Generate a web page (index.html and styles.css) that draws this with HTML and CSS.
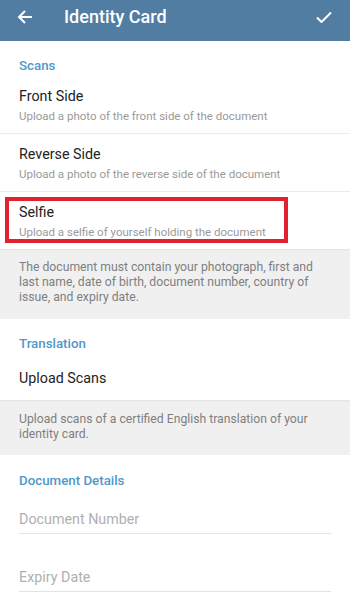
FILE: index.html
```html
<!DOCTYPE html>
<html>
<head>
<meta charset="utf-8">
<link rel="stylesheet" href="styles.css">
</head>
<body>
<div class="app">
  <header class="topbar">
    <svg class="icon back" width="16" height="16" viewBox="0 0 16 16"><path d="M15 8H2M8 2L2 8l6 6" fill="none" stroke="#fff" stroke-width="2"/></svg>
    <div class="title">Identity Card</div>
    <svg class="icon check" width="16" height="12" viewBox="0 0 16 12"><path d="M1 6.5l4.5 4.5L15 1.5" fill="none" stroke="#fff" stroke-width="2"/></svg>
  </header>
  <section class="block">
    <div class="heading">Scans</div>
    <div class="row divided">
      <div class="row-title">Front Side</div>
      <div class="row-sub">Upload a photo of the front side of the document</div>
    </div>
    <div class="row divided">
      <div class="row-title">Reverse Side</div>
      <div class="row-sub">Upload a photo of the reverse side of the document</div>
    </div>
    <div class="row selfie">
      <div class="row-title">Selfie</div>
      <div class="row-sub">Upload a selfie of yourself holding the document</div>
      <div class="highlight"></div>
    </div>
  </section>
  <div class="info info-first">The document must contain your photograph, first and last name, date of birth, document number, country of issue, and expiry date.</div>
  <section class="block">
    <div class="heading">Translation</div>
    <div class="row single">
      <div class="row-title">Upload Scans</div>
    </div>
  </section>
  <div class="info info-second">Upload scans of a certified English translation of your identity card.</div>
  <section class="block details">
    <div class="heading heading-details">Document Details</div>
    <div class="field first">Document Number</div>
    <div class="field">Expiry Date</div>
  </section>
</div>
</body>
</html>
```

FILE: styles.css
```css
* { box-sizing: border-box; }
html, body { margin: 0; padding: 0; }
body {
  width: 350px;
  height: 599px;
  overflow: hidden;
  background: #ffffff;
  font-family: Roboto, "Noto Sans", "Liberation Sans", sans-serif;
}
.app { display: flex; flex-direction: column; }
.topbar {
  height: 41px;
  background: #527da3;
  display: flex;
  align-items: center;
  padding: 0 18px 8px 17px;
  box-shadow: 0 1px 0 #c9dbe9;
}
.icon { flex: none; }
.title {
  flex: 1;
  margin-left: 31px;
  color: #ffffff;
  font-size: 18px;
  font-weight: 500;
}
.block { background: #ffffff; }
.heading {
  padding: 15px 19px 0;
  line-height: 20px;
  height: 35px;
  font-size: 13.3px;
  font-weight: 500;
  color: #4f98c9;
}
.row {
  position: relative;
  padding: 10px 0 7px 19px;
}
.row.divided { border-bottom: 1px solid #ebebeb; }
.row-title {
  line-height: 20px;
  font-size: 14.3px;
  color: #222222;
}
.row-sub {
  line-height: 20px;
  font-size: 11.5px;
  color: #9a9a9a;
}
.row.single { padding: 14px 0 12px 19px; }
.highlight {
  position: absolute;
  left: 5px;
  top: 5px;
  width: 283px;
  height: 46px;
  border: 4px solid #e0212f;
}
.info {
  background: #f0f0f0;
  color: #7f7f7f;
  font-size: 12.2px;
  line-height: 15px;
  padding: 0 19px;
  box-shadow: inset 0 2px 2px -1px rgba(0,0,0,0.06);
}
.info-first { padding-top: 11px; padding-bottom: 14px; }
.info-second { padding-top: 12px; padding-bottom: 13px; }
.heading-details { height: 36px; padding-top: 16px; }
.details { padding: 0 19px 0 0; }
.field {
  margin: 33px 0 0 19px;
  line-height: 20px;
  padding-bottom: 4px;
  font-size: 14.3px;
  color: #b0b0b0;
  border-bottom: 1px solid #e3e3e3;
}
.field.first { margin-top: 18px; }
```
